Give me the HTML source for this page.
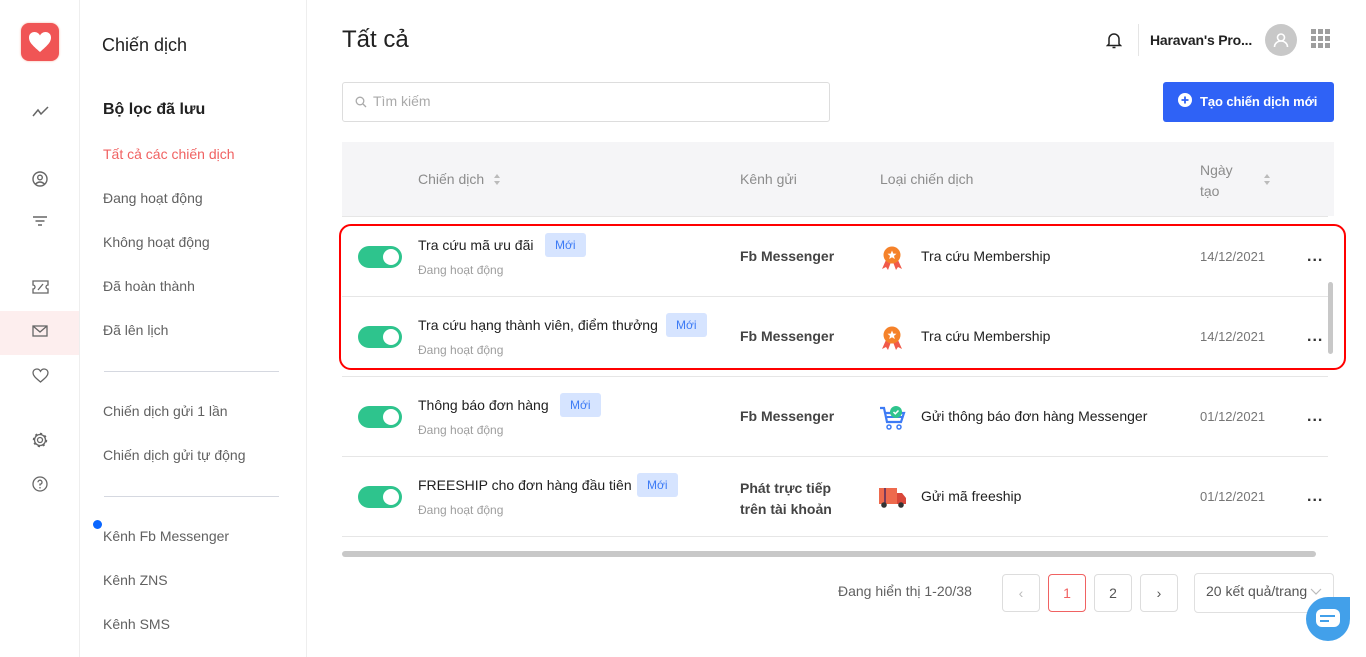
<!DOCTYPE html>
<html><head><meta charset="utf-8"><style>
*{margin:0;padding:0;box-sizing:border-box}
body{width:1366px;height:657px;overflow:hidden;background:#fff;font-family:"Liberation Sans",sans-serif;position:relative;color:#212121}
.a{position:absolute;white-space:nowrap}
.nav{color:#616161;font-size:14px;left:103px}
.ic{position:absolute;left:32px}
.hd{color:#8c8c8c;font-size:14px}
.line{position:absolute;left:342px;width:986px;height:1px;background:#e6e6e6}
.tog{position:absolute;left:358px;width:44px;height:22px;border-radius:11px;background:#2ec48d}
.tog:after{content:"";position:absolute;right:3px;top:3px;width:16px;height:16px;border-radius:50%;background:#fff}
.nm{font-size:14px;color:#212121}
.st{font-size:12px;color:#9e9e9e}
.badge{position:absolute;height:24px;padding:0 10px;line-height:24px;background:#d6e4ff;color:#3d7bf5;font-size:12px;border-radius:3px}
.ch{font-size:14px;color:#444;font-weight:bold}
.dt{font-size:13px;color:#757575}
.dots{font-size:16px;font-weight:bold;color:#333;letter-spacing:1px}
.pg{position:absolute;top:574px;width:38px;height:38px;border:1px solid #ddd;border-radius:4px;text-align:center;line-height:36px;font-size:14px;color:#555}
</style></head><body>
<div class="a" style="left:79px;top:0;width:1px;height:657px;background:#eee"></div>
<div class="a" style="left:306px;top:0;width:1px;height:657px;background:#eee"></div>
<div class="a" style="left:21px;top:23px;width:38px;height:38px;border-radius:8px;background:#f05555;box-shadow:0 0 2px #f7b3a0"></div>
<svg class="a" style="left:28px;top:31px" width="24" height="22" viewBox="0 0 24 22"><path d="M12 21 C4 14 1 11 1 6.5 1 3 3.5 1 6.5 1 9 1 11 2.5 12 4.5 13 2.5 15 1 17.5 1 20.5 1 23 3 23 6.5 23 11 20 14 12 21Z" fill="#fff"/></svg>
<svg class="ic" style="top:106px" width="17" height="12" viewBox="0 0 17 12"><path d="M1 10 L6 4 L9 8 L16 1" stroke="#666" stroke-width="1.5" fill="none"/></svg>
<svg class="ic" style="top:171px" width="16" height="16" viewBox="0 0 16 16"><circle cx="8" cy="8" r="7" stroke="#666" stroke-width="1.4" fill="none"/><circle cx="8" cy="6.5" r="2.3" stroke="#666" stroke-width="1.4" fill="none"/><path d="M3.5 13 Q8 9 12.5 13" stroke="#666" stroke-width="1.4" fill="none"/></svg>
<svg class="ic" style="top:215px" width="16" height="12" viewBox="0 0 16 12"><path d="M1 2H15M3.5 6H12.5M6 10H10" stroke="#666" stroke-width="1.4"/></svg>
<svg class="ic" style="top:280px" width="17" height="14" viewBox="0 0 17 14"><path d="M1 1H16V5A2 2 0 0 0 16 9V13H1V9A2 2 0 0 0 1 5Z M6 10L11 4" stroke="#666" stroke-width="1.3" fill="none"/></svg>
<div class="a" style="left:0;top:311px;width:79px;height:44px;background:#fdeeee"></div>
<svg class="ic" style="top:325px" width="16" height="12" viewBox="0 0 16 12"><rect x="1" y="1" width="14" height="10" stroke="#666" stroke-width="1.3" fill="none"/><path d="M1 1L8 7L15 1" stroke="#666" stroke-width="1.3" fill="none"/></svg>
<svg class="ic" style="top:368px" width="17" height="15" viewBox="0 0 17 15"><path d="M8.5 14C3 9.5 1 7.5 1 4.8 1 2.6 2.7 1 4.8 1 6.4 1 7.8 2 8.5 3.3 9.2 2 10.6 1 12.2 1 14.3 1 16 2.6 16 4.8 16 7.5 14 9.5 8.5 14Z" stroke="#666" stroke-width="1.3" fill="none"/></svg>
<svg class="ic" style="top:432px" width="16" height="16" viewBox="0 0 16 16"><circle cx="8" cy="8" r="2.5" stroke="#666" stroke-width="1.3" fill="none"/><circle cx="8" cy="8" r="5.5" stroke="#666" stroke-width="1.3" fill="none"/><circle cx="8" cy="8" r="6.3" stroke="#666" stroke-width="1.8" stroke-dasharray="2.2 2.7" fill="none"/></svg>
<svg class="ic" style="top:476px" width="16" height="16" viewBox="0 0 16 16"><circle cx="8" cy="8" r="7" stroke="#666" stroke-width="1.3" fill="none"/><path d="M6 6.2A2 2 0 1 1 8 8.2V9.6" stroke="#666" stroke-width="1.3" fill="none"/><circle cx="8" cy="11.8" r=".8" fill="#666"/></svg>
<div class="a" style="left:102px;top:35px;font-size:18px;color:#212121">Chiến dịch</div>
<div class="a" style="left:103px;top:101px;font-size:16px;font-weight:bold">Bộ lọc đã lưu</div>
<div class="a nav" style="top:146px;color:#f06262">Tất cả các chiến dịch</div>
<div class="a nav" style="top:190px">Đang hoạt động</div>
<div class="a nav" style="top:234px">Không hoạt động</div>
<div class="a nav" style="top:278px">Đã hoàn thành</div>
<div class="a nav" style="top:322px">Đã lên lịch</div>
<div class="a" style="left:104px;top:371px;width:175px;height:1px;background:#d5d8e0"></div>
<div class="a nav" style="top:403px">Chiến dịch gửi 1 lần</div>
<div class="a nav" style="top:447px">Chiến dịch gửi tự động</div>
<div class="a" style="left:104px;top:496px;width:175px;height:1px;background:#d5d8e0"></div>
<div class="a" style="left:93px;top:520px;width:9px;height:9px;border-radius:50%;background:#0a66ff"></div>
<div class="a nav" style="top:528px">Kênh Fb Messenger</div>
<div class="a nav" style="top:572px">Kênh ZNS</div>
<div class="a nav" style="top:616px">Kênh SMS</div>
<div class="a" style="left:342px;top:26px;font-size:24px;color:#212121">Tất cả</div>
<svg class="a" style="left:1106px;top:32px" width="16" height="17" viewBox="0 0 16 17"><path d="M3 12V7A5 5 0 0 1 13 7V12L14.5 13.5H1.5Z" stroke="#222" stroke-width="1.5" fill="none"/><path d="M6.5 15.5H9.5" stroke="#222" stroke-width="1.5"/></svg>
<div class="a" style="left:1138px;top:24px;width:1px;height:32px;background:#e5e5e5"></div>
<div class="a" style="left:1150px;top:32px;font-size:14px;font-weight:bold;color:#222;letter-spacing:-0.2px">Haravan's Pro...</div>
<div class="a" style="left:1265px;top:24px;width:32px;height:32px;border-radius:50%;background:#c8c8c8"></div>
<svg class="a" style="left:1271px;top:30px" width="20" height="20" viewBox="0 0 20 20"><circle cx="10" cy="7.5" r="3.5" stroke="#fff" stroke-width="1.6" fill="none"/><path d="M3.5 17A6.5 6 0 0 1 16.5 17" stroke="#fff" stroke-width="1.6" fill="none"/></svg>
<svg class="a" style="left:1311px;top:29px" width="19" height="19" viewBox="0 0 19 19" fill="#9e9e9e"><rect x="0" y="0" width="5" height="5"/><rect x="7" y="0" width="5" height="5"/><rect x="14" y="0" width="5" height="5"/><rect x="0" y="7" width="5" height="5"/><rect x="7" y="7" width="5" height="5"/><rect x="14" y="7" width="5" height="5"/><rect x="0" y="14" width="5" height="5"/><rect x="7" y="14" width="5" height="5"/><rect x="14" y="14" width="5" height="5"/></svg>
<div class="a" style="left:342px;top:82px;width:488px;height:40px;border:1px solid #ddd;border-radius:3px"></div>
<svg class="a" style="left:355px;top:96px" width="12" height="12" viewBox="0 0 12 12"><circle cx="5" cy="5" r="3.8" stroke="#aaa" stroke-width="1.3" fill="none"/><path d="M8 8L11 11" stroke="#aaa" stroke-width="1.3"/></svg>
<div class="a" style="left:373px;top:93px;font-size:14px;color:#aaa">Tìm kiếm</div>
<div class="a" style="left:1163px;top:82px;width:171px;height:40px;background:#2f62f6;border-radius:3px"></div>
<svg class="a" style="left:1178px;top:93px" width="14" height="14" viewBox="0 0 14 14"><circle cx="7" cy="7" r="7" fill="#fff"/><path d="M7 3.5V10.5M3.5 7H10.5" stroke="#2f62f6" stroke-width="1.8"/></svg>
<div class="a" style="left:1200px;top:94px;font-size:13px;font-weight:bold;color:#fff;letter-spacing:-0.1px">Tạo chiến dịch mới</div>
<div class="a" style="left:342px;top:142px;width:992px;height:74px;background:#f5f5f7"></div>
<div class="a hd" style="left:418px;top:171px">Chiến dịch</div>
<svg class="a" style="left:493px;top:173px" width="8" height="13" viewBox="0 0 8 13" fill="#bbb"><path d="M4 1L7 5H1Z M4 12L7 8H1Z"/></svg>
<div class="a hd" style="left:740px;top:171px">Kênh gửi</div>
<div class="a hd" style="left:880px;top:171px">Loại chiến dịch</div>
<div class="a hd" style="left:1200px;top:160px;line-height:21px">Ngày<br>tạo</div>
<svg class="a" style="left:1263px;top:173px" width="8" height="13" viewBox="0 0 8 13" fill="#bbb"><path d="M4 1L7 5H1Z M4 12L7 8H1Z"/></svg>
<div class="line" style="top:216px"></div>
<div class="line" style="top:296px"></div>
<div class="line" style="top:376px"></div>
<div class="line" style="top:456px"></div>
<div class="line" style="top:536px"></div>
<div class="tog" style="top:246px"></div>
<div class="a nm" style="left:418px;top:237px">Tra cứu mã ưu đãi</div>
<div class="badge" style="left:545px;top:233px">Mới</div>
<div class="a st" style="left:418px;top:263px">Đang hoạt động</div>
<div class="a ch" style="left:740px;top:248px">Fb Messenger</div>
<div class="tog" style="top:326px"></div>
<div class="a nm" style="left:418px;top:317px">Tra cứu hạng thành viên, điểm thưởng</div>
<div class="badge" style="left:666px;top:313px">Mới</div>
<div class="a st" style="left:418px;top:343px">Đang hoạt động</div>
<div class="a ch" style="left:740px;top:328px">Fb Messenger</div>
<div class="tog" style="top:406px"></div>
<div class="a nm" style="left:418px;top:397px">Thông báo đơn hàng</div>
<div class="badge" style="left:560px;top:393px">Mới</div>
<div class="a st" style="left:418px;top:423px">Đang hoạt động</div>
<div class="a ch" style="left:740px;top:408px">Fb Messenger</div>
<div class="tog" style="top:486px"></div>
<div class="a nm" style="left:418px;top:477px">FREESHIP cho đơn hàng đầu tiên</div>
<div class="badge" style="left:637px;top:473px">Mới</div>
<div class="a st" style="left:418px;top:503px">Đang hoạt động</div>
<div class="a ch" style="left:740px;top:478px;line-height:21px">Phát trực tiếp<br>trên tài khoản</div>
<svg class="a" style="left:880px;top:245px" width="24" height="26" viewBox="0 0 24 26"><path d="M6 15L2 24L6 22L8 25L11 17Z M18 15L22 24L18 22L16 25L13 17Z" fill="#f05a4a"/><circle cx="12" cy="10" r="8.5" fill="#f5822a"/><path d="M12 5.5L13.3 8.6L16.5 8.8L14 10.9L14.8 14L12 12.3L9.2 14L10 10.9L7.5 8.8L10.7 8.6Z" fill="#fff"/></svg>
<svg class="a" style="left:880px;top:325px" width="24" height="26" viewBox="0 0 24 26"><path d="M6 15L2 24L6 22L8 25L11 17Z M18 15L22 24L18 22L16 25L13 17Z" fill="#f05a4a"/><circle cx="12" cy="10" r="8.5" fill="#f5822a"/><path d="M12 5.5L13.3 8.6L16.5 8.8L14 10.9L14.8 14L12 12.3L9.2 14L10 10.9L7.5 8.8L10.7 8.6Z" fill="#fff"/></svg>
<svg class="a" style="left:879px;top:405px" width="28" height="26" viewBox="0 0 28 26"><path d="M1 3H5L8 17H22L25 8H7" stroke="#3d7bf5" stroke-width="2.2" fill="none"/><path d="M8 12H24" stroke="#3d7bf5" stroke-width="2"/><circle cx="10" cy="22" r="2" stroke="#3d7bf5" stroke-width="1.5" fill="none"/><circle cx="20" cy="22" r="2" stroke="#3d7bf5" stroke-width="1.5" fill="none"/><circle cx="17" cy="7" r="6" fill="#2ec48d"/><path d="M14.5 7L16.3 8.8L19.5 5.5" stroke="#fff" stroke-width="1.5" fill="none"/></svg>
<svg class="a" style="left:879px;top:486px" width="28" height="24" viewBox="0 0 28 24"><rect x="0" y="2" width="18" height="16" fill="#ee6a4d"/><rect x="5" y="2" width="2" height="16" fill="#7a3a5a"/><path d="M18 7H23L27 12V18H18Z" fill="#d9473a"/><circle cx="5" cy="19" r="2.8" fill="#333"/><circle cx="22" cy="19" r="2.8" fill="#333"/></svg>
<div class="a nm" style="left:921px;top:248px">Tra cứu Membership</div>
<div class="a nm" style="left:921px;top:328px">Tra cứu Membership</div>
<div class="a nm" style="left:921px;top:408px">Gửi thông báo đơn hàng Messenger</div>
<div class="a nm" style="left:921px;top:488px">Gửi mã freeship</div>
<div class="a dt" style="left:1200px;top:249px">14/12/2021</div>
<div class="a dt" style="left:1200px;top:329px">14/12/2021</div>
<div class="a dt" style="left:1200px;top:409px">01/12/2021</div>
<div class="a dt" style="left:1200px;top:489px">01/12/2021</div>
<div class="a dots" style="left:1307px;top:248px">...</div>
<div class="a dots" style="left:1307px;top:328px">...</div>
<div class="a dots" style="left:1307px;top:408px">...</div>
<div class="a dots" style="left:1307px;top:488px">...</div>
<div class="a" style="left:1328px;top:282px;width:5px;height:72px;border-radius:3px;background:#c8c8c8"></div>
<div class="a" style="left:339px;top:224px;width:1007px;height:146px;border:2px solid #f00;border-radius:12px"></div>
<div class="a" style="left:342px;top:551px;width:974px;height:6px;border-radius:3px;background:#c8c8c8"></div>
<div class="a" style="left:838px;top:583px;font-size:14px;color:#616161">Đang hiển thị 1-20/38</div>
<div class="pg" style="left:1002px;color:#bbb">‹</div>
<div class="pg" style="left:1048px;border-color:#f06262;color:#f06262">1</div>
<div class="pg" style="left:1094px">2</div>
<div class="pg" style="left:1140px">›</div>
<div class="a" style="left:1194px;top:573px;width:140px;height:40px;border:1px solid #e0e0e0;border-radius:4px"></div>
<div class="a" style="left:1206px;top:583px;font-size:14px;color:#555">20 kết quả/trang</div>
<svg class="a" style="left:1310px;top:588px" width="12" height="8" viewBox="0 0 12 8"><path d="M1 1L6 6L11 1" stroke="#bbb" stroke-width="1.2" fill="none"/></svg>
<div class="a" style="left:1306px;top:597px;width:44px;height:44px;border-radius:22px 0 22px 22px;background:#42a0ea"></div>
<div class="a" style="left:1316px;top:609px;width:24px;height:18px;border-radius:6px;background:#fff"></div>
<div class="a" style="left:1320px;top:615px;width:15px;height:2px;background:#42a0ea"></div>
<div class="a" style="left:1320px;top:620px;width:9px;height:2px;background:#42a0ea"></div>
</body></html>
